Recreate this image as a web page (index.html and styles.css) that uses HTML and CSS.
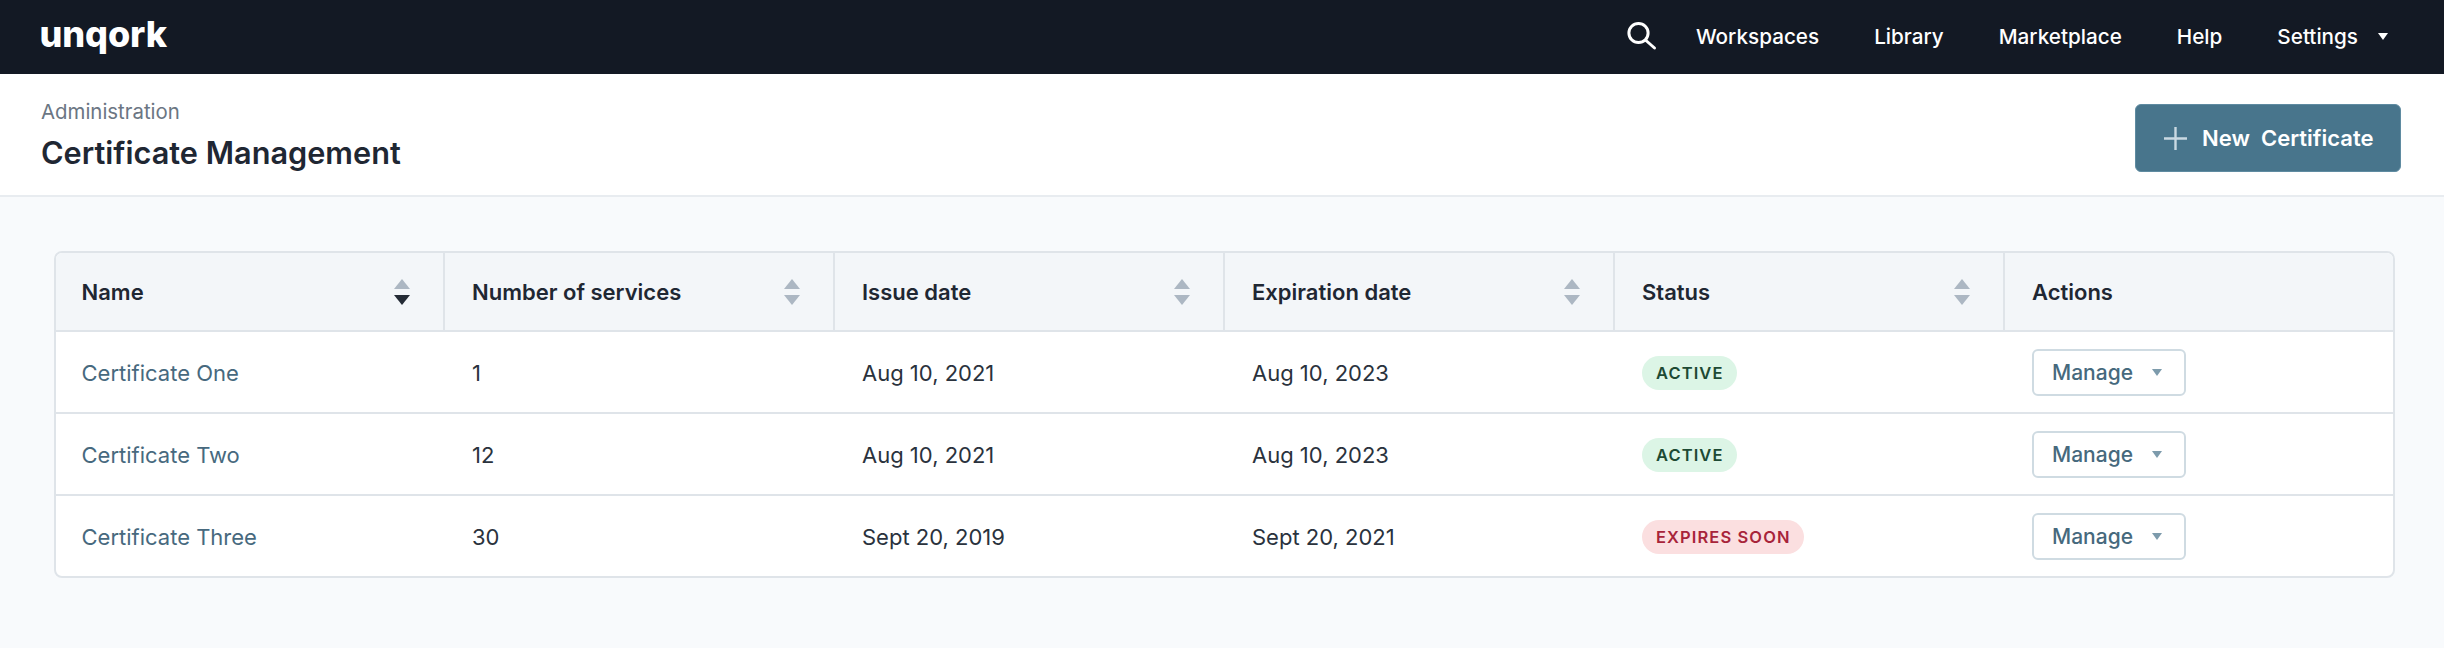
FILE: index.html
```html
<!DOCTYPE html>
<html lang="en">
<head>
<meta charset="utf-8">
<title>Certificate Management</title>
<link rel="stylesheet" href="styles.css">
</head>
<body>
<nav class="topbar">
  <span class="logo">unqork</span>
  <div class="nav-links">
    <svg class="search" width="30" height="30" viewBox="0 0 30 30" aria-hidden="true"><circle cx="11.5" cy="12" r="9.6" fill="none" stroke="#fff" stroke-width="3"/><path d="M19 19.5l8.5 7.5" fill="none" stroke="#fff" stroke-width="3" stroke-linecap="round"/></svg>
    <a class="nav-link">Workspaces</a>
    <a class="nav-link">Library</a>
    <a class="nav-link">Marketplace</a>
    <a class="nav-link">Help</a>
    <a class="nav-link nav-settings">Settings<span class="caret caret-white"></span></a>
  </div>
</nav>
<header class="page-head">
  <div>
    <div class="crumb">Administration</div>
    <h1 class="title">Certificate Management</h1>
  </div>
  <button class="primary">
    <svg width="25" height="25" viewBox="0 0 25 25" aria-hidden="true"><path d="M12.5 1v23M1 12.5h23" stroke="#c9d9e2" stroke-width="2.4" fill="none"/></svg>
    <span>New&nbsp; Certificate</span>
  </button>
</header>
<main class="content">
  <table class="certs">
    <thead>
      <tr>
        <th class="col-first"><div class="th-in">Name<span class="sort sort-down"><i class="up"></i><i class="down"></i></span></div></th>
        <th><div class="th-in">Number of services<span class="sort"><i class="up"></i><i class="down"></i></span></div></th>
        <th><div class="th-in">Issue date<span class="sort"><i class="up"></i><i class="down"></i></span></div></th>
        <th><div class="th-in">Expiration date<span class="sort"><i class="up"></i><i class="down"></i></span></div></th>
        <th><div class="th-in">Status<span class="sort"><i class="up"></i><i class="down"></i></span></div></th>
        <th>Actions</th>
      </tr>
    </thead>
    <tbody>
      <tr>
        <td><a class="cert-link">Certificate One</a></td><td>1</td><td>Aug 10, 2021</td><td>Aug 10, 2023</td>
        <td><span class="badge badge-ok">ACTIVE</span></td>
        <td><button class="manage">Manage<span class="caret caret-teal"></span></button></td>
      </tr>
      <tr>
        <td><a class="cert-link">Certificate Two</a></td><td>12</td><td>Aug 10, 2021</td><td>Aug 10, 2023</td>
        <td><span class="badge badge-ok">ACTIVE</span></td>
        <td><button class="manage">Manage<span class="caret caret-teal"></span></button></td>
      </tr>
      <tr>
        <td><a class="cert-link">Certificate Three</a></td><td>30</td><td>Sept 20, 2019</td><td>Sept 20, 2021</td>
        <td><span class="badge badge-warn">EXPIRES SOON</span></td>
        <td><button class="manage">Manage<span class="caret caret-teal"></span></button></td>
      </tr>
    </tbody>
  </table>
</main>
</body>
</html>
```
FILE: styles.css
```css
* { box-sizing: border-box; }
html, body { height: 100%; }
body {
  margin: 0;
  background: #f8fafc;
  color: #1f2733;
  font-family: Inter, "Liberation Sans", sans-serif;
  font-size: 22px;
  overflow: hidden;
}
.topbar {
  height: 74px;
  background: #131924;
  display: flex;
  align-items: center;
  justify-content: space-between;
  padding: 0 56px 2px 39.5px;
  color: #fff;
}
.logo {
  font-size: 36px;
  font-weight: 800;
  letter-spacing: -0.1px;
  line-height: 1;
  position: relative;
  top: -2px;
}
.nav-links { display: flex; align-items: center; gap: 55px; }
.search { margin-right: -16px; }
.nav-link { font-weight: 500; font-size: 20.7px; }
.nav-settings { display: flex; align-items: center; gap: 20px; }
.caret { display: inline-block; width: 0; height: 0; border-style: solid; border-color: transparent; border-width: 7px 5.5px 0; }
.caret-white { border-top-color: #fff; }
.caret-teal { border-top-color: #7d9bac; }
.page-head {
  height: 123px;
  background: #fff;
  border-bottom: 2px solid #e8ecf0;
  display: flex;
  align-items: center;
  justify-content: space-between;
  padding: 0 43px 0 41px;
}
.crumb { color: #6b7683; font-size: 20.4px; line-height: 28px; }
.title { margin: 9px 0 0; font-size: 30.7px; font-weight: 600; line-height: 36px; color: #1f2733; }
.primary {
  width: 266px;
  height: 68px;
  align-self: flex-start;
  margin-top: 30px;
  background: #48758c;
  border: 1px solid #5f8ba1;
  border-radius: 6px;
  color: #fff;
  font: 600 22px Inter, "Liberation Sans", sans-serif;
  display: flex;
  align-items: center;
  gap: 14px;
  padding: 0 0 0 27px;
}
.content { padding: 54px 49px 0 54px; }
.certs {
  width: 100%;
  table-layout: fixed;
  border-collapse: separate;
  border-spacing: 0;
  background: #fff;
  border: 2px solid #dfe4e9;
  border-radius: 8px;
  overflow: hidden;
}
.certs th {
  height: 79px;
  background: #f3f6f9;
  border-bottom: 2px solid #dfe4e9;
  border-right: 2px solid #dfe4e9;
  text-align: left;
  font-weight: 600;
  font-size: 22px;
  padding: 0 26px 0 27px;
  width: 390px;
}
.certs th.col-first { width: 389px; padding-left: 25.5px; }
.certs th:last-child { border-right: 0; width: auto; }
.th-in { display: flex; align-items: center; justify-content: space-between; }
.sort { display: flex; flex-direction: column; gap: 6px; margin-right: 7px; }
.sort i { display: block; width: 0; height: 0; border-style: solid; border-color: transparent; }
.sort .up { border-width: 0 8px 10px; border-bottom-color: #acb7c3; }
.sort .down { border-width: 10px 8px 0; border-top-color: #acb7c3; }
.sort-down .down { border-top-color: #242b36; }
.certs td {
  height: 82px;
  padding: 1px 26px 0 27px;
  border-bottom: 2px solid #dfe4e9;
  font-size: 22px;
  color: #2a323d;
}
.certs td:first-child { padding-left: 25.5px; }
.certs tr:last-child td { border-bottom: 0; height: 80px; }
.cert-link { color: #47697e; }
.badge {
  display: inline-block;
  height: 34px;
  line-height: 34px;
  padding: 0 13px 0 14px;
  border-radius: 17px;
  font-size: 16.5px;
  font-weight: 600;
  letter-spacing: 1.1px;
}
.badge-ok { background: #dcf5e6; color: #1d4a34; }
.badge-warn { background: #fbdfe0; color: #a8243a; }
.manage {
  width: 154px;
  height: 47px;
  background: #fff;
  border: 2px solid #cfdbe2;
  border-radius: 6px;
  color: #46697d;
  font: 500 21px Inter, "Liberation Sans", sans-serif;
  display: flex;
  align-items: center;
  gap: 19px;
  padding: 0 0 0 18px;
}
```
